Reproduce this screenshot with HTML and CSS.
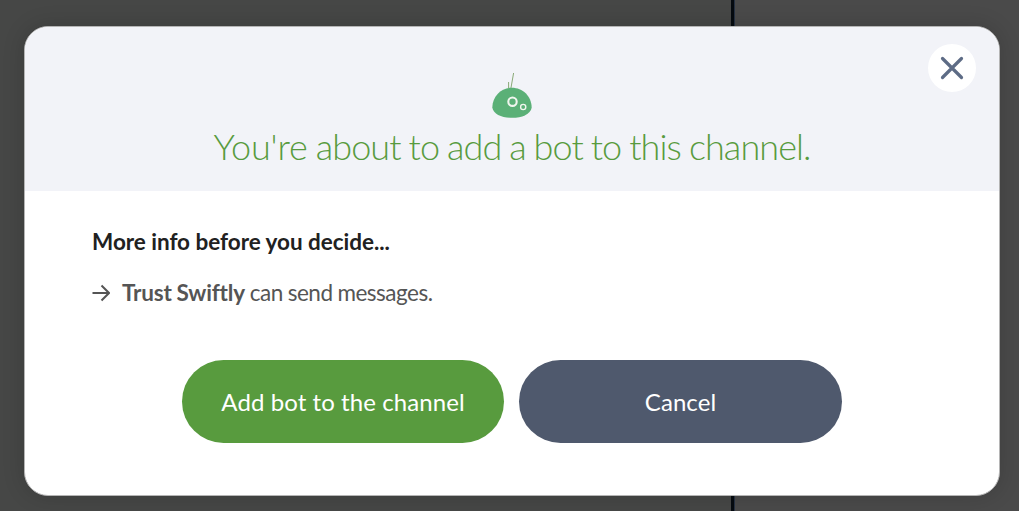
FILE: index.html
```html
<!DOCTYPE html>
<html lang="en">
<head>
<meta charset="utf-8">
<title>Add a bot</title>
<link rel="stylesheet" href="styles.css">
</head>
<body>
<div class="backdrop">
  <div class="dialog" role="dialog" aria-labelledby="title">
    <header class="dialog-header">
      <svg class="bot" viewBox="0 0 42 48" width="42" height="48" aria-hidden="true">
        <path d="M19.600 19 22.600 2M17.600 17V11" fill="none" stroke="#8aa977" stroke-width="1"/>
        <path d="M1.300 36.500C1.500 25 10.500 16.700 21 16.700S40.500 25 40.700 36.500C39.500 43.500 31 46.800 21 46.800S2.500 43.500 1.300 36.500Z" fill="#5bb077"/>
        <circle cx="21.500" cy="30.700" r="4.200" fill="none" stroke="#f0f5ee" stroke-width="2.100"/>
        <circle cx="32.200" cy="36" r="2.600" fill="none" stroke="#f0f5ee" stroke-width="1.400"/>
      </svg>
      <h1 class="title" id="title"><span class="title-lead">You're</span> about to add a bot to this channel.</h1>
      <button class="close" aria-label="Close">
        <svg viewBox="0 0 24 24" width="24" height="24"><path d="M2.500 2.500 21.500 21.500M21.500 2.500 2.500 21.500" fill="none" stroke="#5d6b85" stroke-width="3.200" stroke-linecap="round"/></svg>
      </button>
    </header>
    <div class="dialog-body">
      <h2 class="subtitle">More info before you decide...</h2>
      <div class="permission">
        <svg viewBox="0 0 18 18" width="18" height="18" aria-hidden="true"><path d="M.5 9H17M9.500 1.500 17 9 9.500 16.500" fill="none" stroke="#555" stroke-width="2"/></svg>
        <p class="permission-text"><strong>Trust Swiftly</strong> can send messages.</p>
      </div>
      <div class="actions">
        <button class="button button-add"><span>Add bot to the channel</span></button>
        <button class="button button-cancel"><span>Cancel</span></button>
      </div>
    </div>
  </div>
</div>
</body>
</html>
```
FILE: styles.css
```css
* { box-sizing: border-box; }
body {
  margin: 0;
  font-family: Lato, "Open Sans", sans-serif;
}
h1, h2, p { margin: 0; }
button { border: 0; padding: 0; font-family: inherit; cursor: pointer; }
.backdrop {
  width: 1019px;
  height: 511px;
  padding: 26px 19px 15px 24px;
  overflow: hidden;
  background: linear-gradient(90deg, #464746 0 731px, #060b10 731px 734px, #263142 734px 735px, #4a4a4a 735px);
}
.dialog {
  position: relative;
  width: 976px;
  height: 470px;
  border: 1px solid #b5b5b5;
  border-radius: 24px;
  overflow: hidden;
  background: #fff;
  box-shadow: 0 0 22px rgba(0, 0, 0, .16);
}
.dialog-header {
  height: 164px;
  padding-top: 44px;
  display: flex;
  flex-direction: column;
  align-items: center;
  background: #f2f3f8;
}
.bot { display: block; }
.title {
  margin-top: 3px;
  font-size: 36px;
  line-height: 48px;
  font-weight: 300;
  letter-spacing: -.9px;
  word-spacing: -1px;
  color: #589b3e;
  white-space: nowrap;
}
.title-lead { letter-spacing: -.1px; }
.close {
  position: absolute;
  top: 17px;
  right: 23.5px;
  width: 48px;
  height: 48px;
  border-radius: 50%;
  background: #fff;
  display: grid;
  place-items: center;
}
.dialog-body { padding: 35px 67px 0; }
.subtitle {
  font-size: 22.5px;
  line-height: 32px;
  font-weight: 700;
  letter-spacing: -.03px;
  color: #212121;
}
.permission {
  margin-top: 19px;
  display: flex;
  align-items: center;
  gap: 12px;
  color: #555;
}
.permission-text {
  font-size: 22.5px;
  line-height: 32px;
  letter-spacing: -.5px;
  word-spacing: -.3px;
}
.permission-text strong { letter-spacing: -.2px; }
.actions {
  margin-top: 51px;
  display: flex;
  justify-content: center;
  gap: 15px;
}
.button {
  width: 322px;
  height: 83px;
  border-radius: 42px;
  font-size: 24px;
  letter-spacing: .08px;
  color: #fff;
}
.button-add { background: #589b3e; }
.button-cancel { width: 323px; background: #4f596d; }
```
